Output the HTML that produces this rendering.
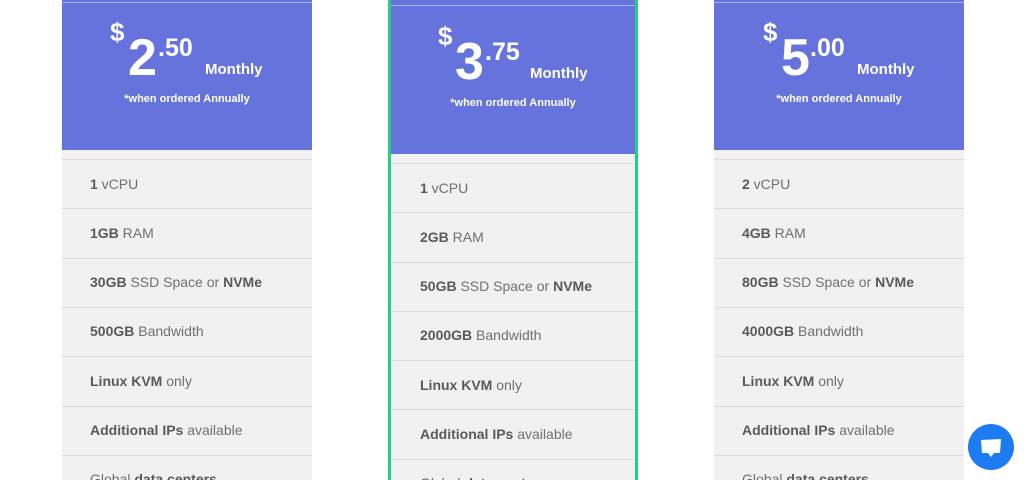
<!DOCTYPE html>
<html><head><style>
body{margin:0;width:1024px;height:480px;overflow:hidden;background:#fff;font-family:"Liberation Sans",sans-serif;position:relative}
.card{position:absolute;top:0;width:250px;height:480px;background:#f1f1f1;overflow:hidden}
.hd{position:absolute;left:0;top:0;width:250px;background:#6673dc;color:#fff}
.hl{position:absolute;left:0;width:250px;height:1px;background:#aab2ee}
.sym{position:absolute;font-size:26px;font-weight:bold}
.big{position:absolute;font-size:52px;font-weight:bold;line-height:50px}
.cent{position:absolute;font-size:25px;font-weight:bold}
.mo{position:absolute;font-size:15px;font-weight:bold}
.ann{position:absolute;left:0;width:250px;text-align:center;font-size:11px;font-weight:bold}
.row{position:absolute;left:28px;font-size:14px;color:#707070}
.row b{color:#5a5a5a}
.ln{position:absolute;left:0;width:250px;height:1px;background:#dcdcdc}
</style></head><body>

<div class="card" style="left:62px">
 <div class="hd" style="height:150px">
  <div class="hl" style="top:2px"></div>
  <div class="sym" style="left:48px;top:17px">$</div>
  <div class="big" style="left:66px;top:33px">2</div>
  <div class="cent" style="left:96px;top:34px">.50</div>
  <div class="mo" style="left:143px;top:61px">Monthly</div>
  <div class="ann" style="top:93px">*when ordered Annually</div>
 </div>
 <div class="ln" style="top:159px"></div>
 <div class="row" style="top:176px"><b>1</b> vCPU</div>
 <div class="ln" style="top:208px"></div>
 <div class="row" style="top:225px"><b>1GB</b> RAM</div>
 <div class="ln" style="top:258px"></div>
 <div class="row" style="top:274px"><b>30GB</b> SSD Space or <b>NVMe</b></div>
 <div class="ln" style="top:307px"></div>
 <div class="row" style="top:323px"><b>500GB</b> Bandwidth</div>
 <div class="ln" style="top:356px"></div>
 <div class="row" style="top:373px"><b>Linux KVM</b> only</div>
 <div class="ln" style="top:406px"></div>
 <div class="row" style="top:422px"><b>Additional IPs</b> available</div>
 <div class="ln" style="top:455px"></div>
 <div class="row" style="top:471px">Global <b>data centers</b></div>
</div>

<div class="card" style="left:388px;width:250px;box-sizing:border-box;border-left:3px solid #1ed184;border-right:3px solid #1ed184">
 <div class="hd" style="height:154px;width:244px">
  <div class="hl" style="top:5px;width:244px"></div>
  <div class="sym" style="left:47px;top:21px">$</div>
  <div class="big" style="left:64px;top:37px">3</div>
  <div class="cent" style="left:94px;top:38px">.75</div>
  <div class="mo" style="left:139px;top:65px">Monthly</div>
  <div class="ann" style="top:97px;width:244px">*when ordered Annually</div>
 </div>
 <div class="ln" style="top:163px;width:244px"></div>
 <div class="row" style="top:180px;left:29px"><b>1</b> vCPU</div>
 <div class="ln" style="top:212px;width:244px"></div>
 <div class="row" style="top:229px;left:29px"><b>2GB</b> RAM</div>
 <div class="ln" style="top:262px;width:244px"></div>
 <div class="row" style="top:278px;left:29px"><b>50GB</b> SSD Space or <b>NVMe</b></div>
 <div class="ln" style="top:311px;width:244px"></div>
 <div class="row" style="top:327px;left:29px"><b>2000GB</b> Bandwidth</div>
 <div class="ln" style="top:360px;width:244px"></div>
 <div class="row" style="top:377px;left:29px"><b>Linux KVM</b> only</div>
 <div class="ln" style="top:409px;width:244px"></div>
 <div class="row" style="top:426px;left:29px"><b>Additional IPs</b> available</div>
 <div class="ln" style="top:459px;width:244px"></div>
 <div class="row" style="top:475px;left:29px">Global <b>data centers</b></div>
</div>

<div class="card" style="left:714px">
 <div class="hd" style="height:150px">
  <div class="hl" style="top:2px"></div>
  <div class="sym" style="left:49px;top:17px">$</div>
  <div class="big" style="left:67px;top:33px">5</div>
  <div class="cent" style="left:96px;top:34px">.00</div>
  <div class="mo" style="left:143px;top:61px">Monthly</div>
  <div class="ann" style="top:93px">*when ordered Annually</div>
 </div>
 <div class="ln" style="top:159px"></div>
 <div class="row" style="top:176px"><b>2</b> vCPU</div>
 <div class="ln" style="top:208px"></div>
 <div class="row" style="top:225px"><b>4GB</b> RAM</div>
 <div class="ln" style="top:258px"></div>
 <div class="row" style="top:274px"><b>80GB</b> SSD Space or <b>NVMe</b></div>
 <div class="ln" style="top:307px"></div>
 <div class="row" style="top:323px"><b>4000GB</b> Bandwidth</div>
 <div class="ln" style="top:356px"></div>
 <div class="row" style="top:373px"><b>Linux KVM</b> only</div>
 <div class="ln" style="top:406px"></div>
 <div class="row" style="top:422px"><b>Additional IPs</b> available</div>
 <div class="ln" style="top:455px"></div>
 <div class="row" style="top:471px">Global <b>data centers</b></div>
</div>

<div style="position:absolute;left:968px;top:424px;width:46px;height:46px;border-radius:50%;background:#1e7cf2"></div>
<svg style="position:absolute;left:968px;top:424px" width="46" height="46"><path d="M13 16 L33 15 L32 29 L26 29 L23 33 L20 29 L14 29 Z" fill="#fff"/></svg>
</body></html>
